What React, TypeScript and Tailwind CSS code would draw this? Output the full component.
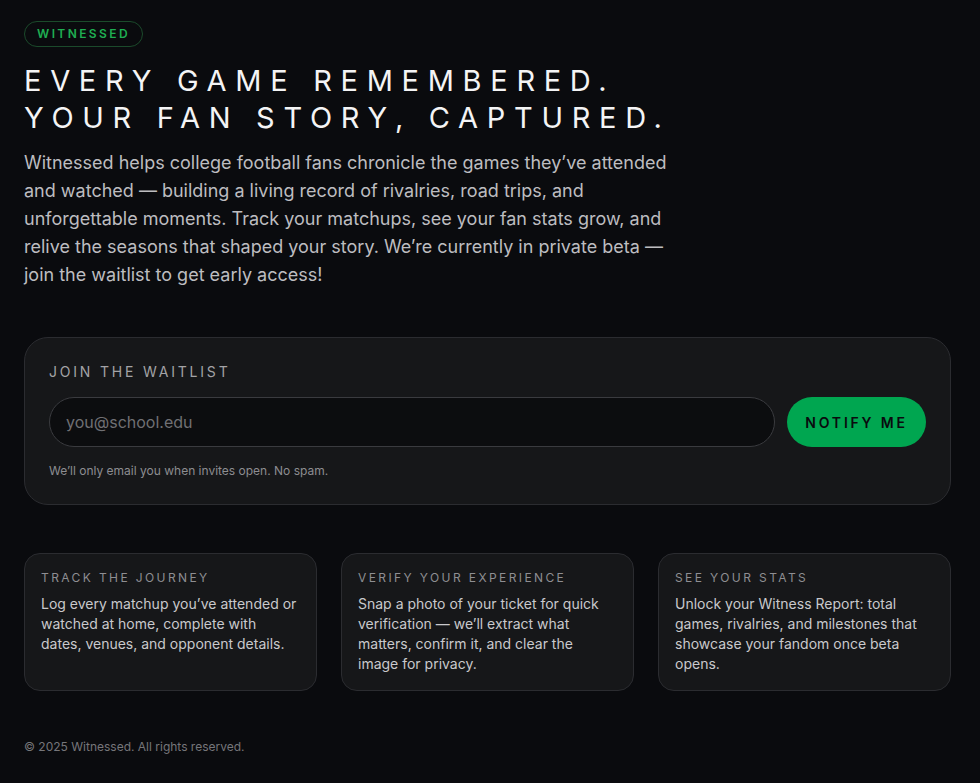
const features = [
  {
    title: "Track the journey",
    body: "Log every matchup you’ve attended or watched at home, complete with dates, venues, and opponent details.",
  },
  {
    title: "Verify your experience",
    body: "Snap a photo of your ticket for quick verification — we’ll extract what matters, confirm it, and clear the image for privacy.",
  },
  {
    title: "See your stats",
    body: "Unlock your Witness Report: total games, rivalries, and milestones that showcase your fandom once beta opens.",
  },
];

export default function App() {
  return (
    <div className="min-h-screen bg-[#0a0b0e] font-['Inter',sans-serif] text-white">
      <div className="w-[927px] ml-6 pt-5 pb-6">
        {/* Badge */}
        <span className="inline-flex h-[26px] items-center rounded-full border border-[#1b4a2b] px-3 text-[12px] font-semibold uppercase tracking-[0.2em] text-[#1fae52]">
          Witnessed
        </span>

        {/* Hero */}
        <h1 className="mt-[15px] text-[29px] font-normal uppercase leading-[37px] tracking-[0.3em] text-[#f4f4f5]">
          Every game remembered.
          <br />
          Your fan story, captured.
        </h1>
        <p className="mt-[13px] max-w-[672px] text-[18px] leading-[28px] text-[#bdbdc0]">
          Witnessed helps college football fans chronicle the games they’ve attended and watched — building a living record of rivalries, road trips, and unforgettable moments. Track your matchups, see your fan stats grow, and relive the seasons that shaped your story. We’re currently in private beta — join the waitlist to get early access!
        </p>

        {/* Waitlist */}
        <div className="mt-[48px] rounded-[24px] border border-[#2b2c30] bg-[#161719] px-6 pt-[23px] pb-6">
          <div className="text-[14px] uppercase tracking-[0.2em] text-[#a3a3a6]">
            Join the waitlist
          </div>
          <form className="mt-[15px] flex gap-3" onSubmit={(e) => e.preventDefault()}>
            <input
              type="email"
              placeholder="you@school.edu"
              className="h-[50px] flex-1 rounded-full border border-[#3a3b3f] bg-[#0c0d0f] px-4 text-[16px] text-white outline-none placeholder:text-[#707074]"
            />
            <button
              type="submit"
              className="h-[50px] w-[139px] rounded-full bg-[#00a650] text-[14px] font-semibold uppercase tracking-[0.2em] text-[#0a0b0e]"
            >
              Notify me
            </button>
          </form>
          <p className="mt-[15px] text-[12px] text-[#8d8d91]">
            We’ll only email you when invites open. No spam.
          </p>
        </div>

        {/* Features */}
        <div className="mt-[48px] grid grid-cols-3 gap-6">
          {features.map((f) => (
            <div
              key={f.title}
              className="rounded-[16px] border border-[#2b2c30] bg-[#161719] px-4 pt-[15px] pb-4"
            >
              <div className="text-[12px] uppercase tracking-[0.2em] text-[#8e8e92]">
                {f.title}
              </div>
              <p className="mt-[7px] text-[14px] leading-[20px] text-[#c9c9cc]">
                {f.body}
              </p>
            </div>
          ))}
        </div>

        {/* Footer */}
        <footer className="mt-[47px] text-[12px] text-[#76767a]">
          © 2025 Witnessed. All rights reserved.
        </footer>
      </div>
    </div>
  );
}
